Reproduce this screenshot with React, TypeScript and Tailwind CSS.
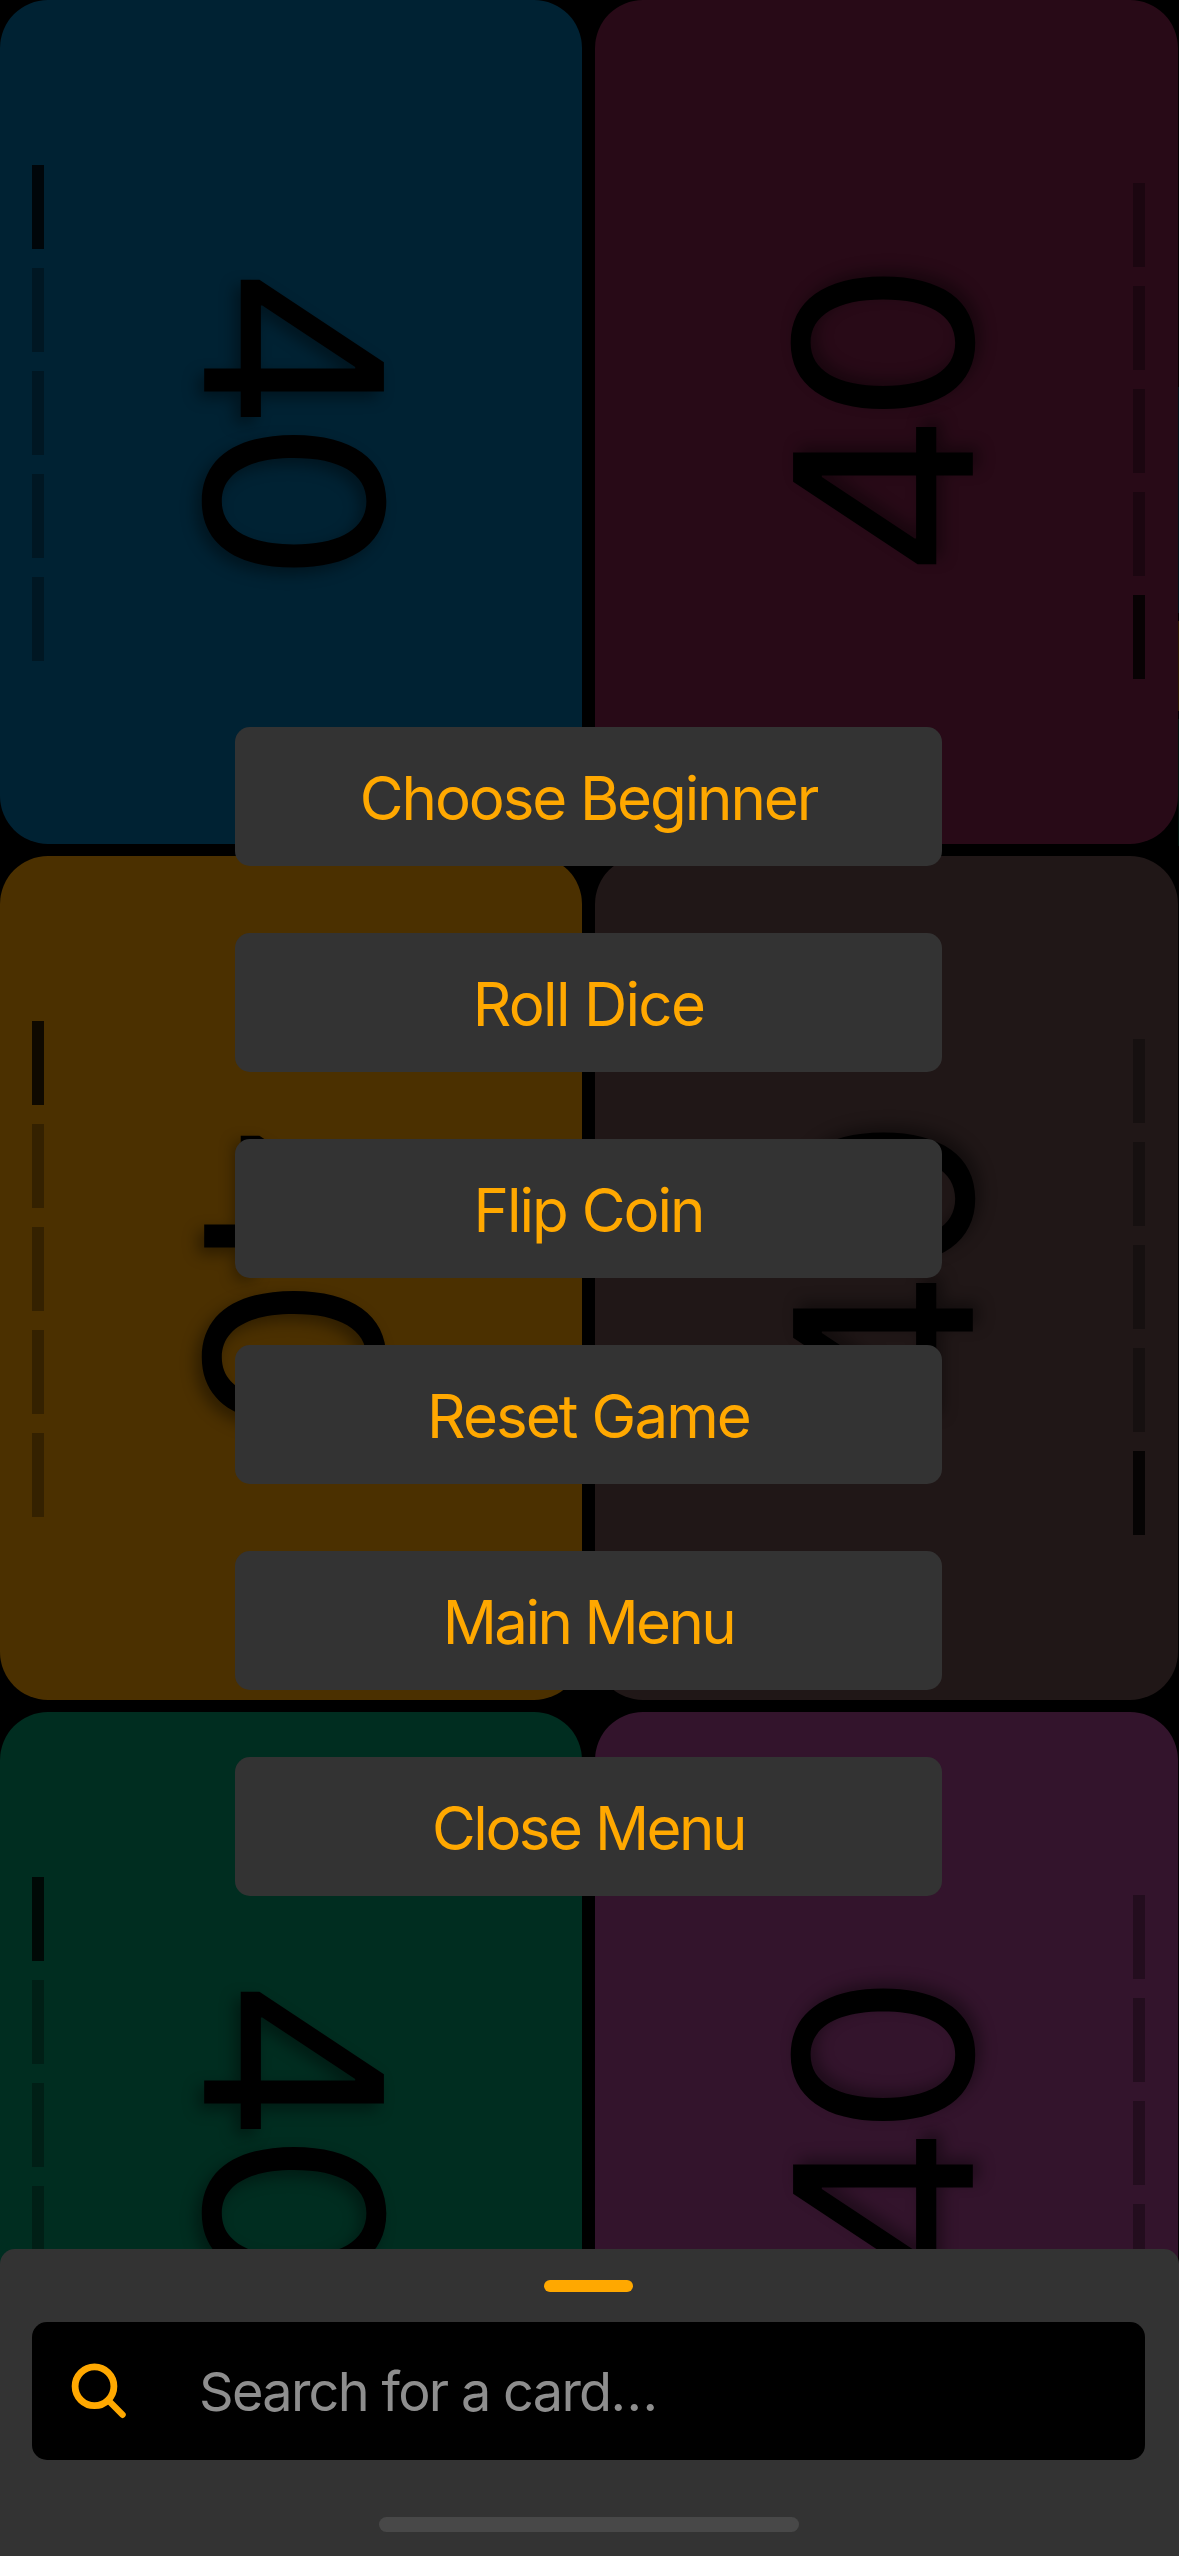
import React from "react";

type Card = { color: string; side: "left" | "right" };

const cards: Card[] = [
  { color: "bg-[#002233]", side: "left" },
  { color: "bg-[#280a17]", side: "right" },
  { color: "bg-[#4b3000]", side: "left" },
  { color: "bg-[#201717]", side: "right" },
  { color: "bg-[#002d20]", side: "left" },
  { color: "bg-[#33142c]", side: "right" },
];

const actions = [
  { label: "Choose Beginner", tracking: "tracking-[-2.1px]" },
  { label: "Roll Dice", tracking: "tracking-[-1.7px]" },
  { label: "Flip Coin", tracking: "tracking-[-2px]" },
  { label: "Reset Game", tracking: "tracking-[-1.9px]" },
  { label: "Main Menu", tracking: "tracking-[-2.6px]" },
  { label: "Close Menu", tracking: "tracking-[-2.5px]" },
];

function Meter() {
  return (
    <div className="flex h-[496px] w-3 flex-col justify-between">
      <div className="h-[84px] bg-black/80" />
      <div className="h-[84px] bg-black/30" />
      <div className="h-[84px] bg-black/30" />
      <div className="h-[84px] bg-black/30" />
      <div className="h-[84px] bg-black/30" />
    </div>
  );
}

function PlayerCard({ color, side }: Card) {
  return (
    <div className={`${color} ${side === "right" ? "rotate-180 pl-[33px]" : "pl-8"} flex h-[844px] items-start rounded-[48px]`}>
      <div className="pt-[165px]">
        <Meter />
      </div>
      <div className="flex h-full w-[500px] items-center justify-center">
        <span className="translate-y-[-5px] rotate-90 scale-x-[1.05] text-[247px] leading-none tracking-[-12px] text-black [text-shadow:6px_6px_15px_rgba(0,0,0,0.4)]">40</span>
      </div>
    </div>
  );
}

export default function App() {
  return (
    <div className="relative h-[2556px] w-[1179px] overflow-hidden bg-black font-['Inter',sans-serif]">
      <div className="grid grid-cols-[582px_583px] gap-x-[13px] gap-y-3">
        {cards.map((c, i) => (
          <PlayerCard key={i} {...c} />
        ))}
      </div>

      {/* Edge of the neighbouring page */}
      <div className="absolute right-0 top-[387px] flex w-px flex-col gap-2">
        <div className="h-[226px] bg-[#00151b]" />
        <div className="h-[90px] bg-[#2c1b00]" />
        <div className="h-[127px] bg-[#00150e]" />
      </div>

      <nav className="absolute left-[235px] top-[727px] flex w-[707px] flex-col gap-[67px]">
        {actions.map((a) => (
          <button key={a.label} className={`${a.tracking} h-[139px] rounded-[15px] bg-[#333333] pt-[2px] text-[60px] text-[#ffa800]`}>
            {a.label}
          </button>
        ))}
      </nav>

      <section className="absolute bottom-0 left-0 flex h-[307px] w-full flex-col items-center rounded-t-[15px] bg-[#333333] pr-0.5 pt-[31px]">
        <div className="h-3 w-[89px] rounded-full bg-[#ffa800]" />
        <div className="mt-[30px] flex h-[138px] w-[1113px] items-center rounded-[15px] bg-black pl-[38px]">
          <svg viewBox="0 0 60 60" className="h-[60px] w-[60px]" fill="none" stroke="#ffa800" strokeWidth="6.8" strokeLinecap="round">
            <circle cx="24.5" cy="25.3" r="19.4" />
            <path d="M38.5 39.5 52.6 53.8" strokeWidth="6.3" />
          </svg>
          <span className="ml-[69px] pt-px text-[54px] tracking-[-1.7px] text-[#8e8e8e]">
            Search for a card<span className="tracking-[0.5px]">...</span>
          </span>
        </div>
        <div className="mt-[57px] h-[15px] w-[420px] rounded-full bg-[#484848]" />
      </section>
    </div>
  );
}
